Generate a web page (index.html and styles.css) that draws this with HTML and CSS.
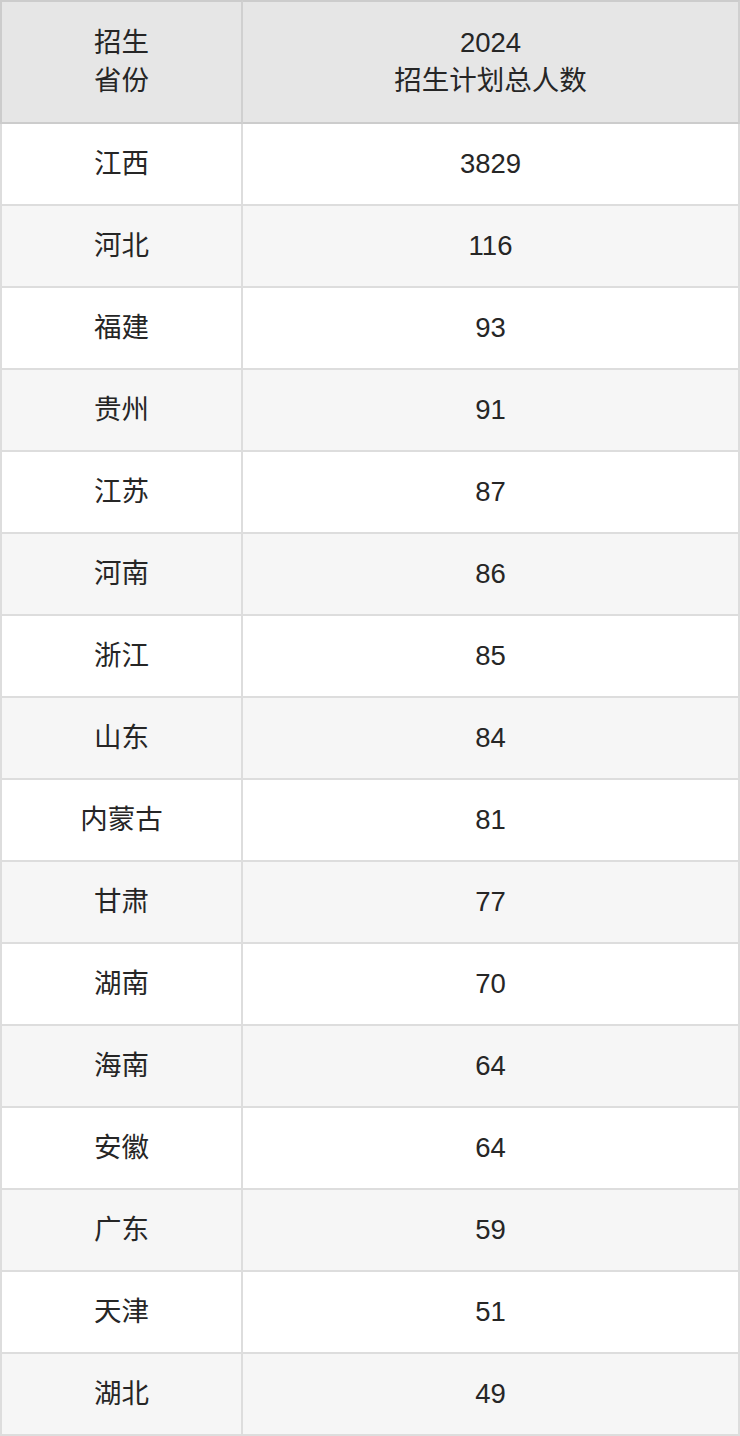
FILE: index.html
```html
<!DOCTYPE html>
<html lang="zh">
<head>
<meta charset="utf-8">
<title>2024 招生计划</title>
<link rel="stylesheet" href="styles.css">
</head>
<body>
<div class="table">
  <div class="cell head first">招生<br>省份</div>
  <div class="cell head">2024<br>招生计划总人数</div>

  <div class="cell first">江西</div><div class="cell">3829</div>
  <div class="cell first alt">河北</div><div class="cell alt">116</div>
  <div class="cell first">福建</div><div class="cell">93</div>
  <div class="cell first alt">贵州</div><div class="cell alt">91</div>
  <div class="cell first">江苏</div><div class="cell">87</div>
  <div class="cell first alt">河南</div><div class="cell alt">86</div>
  <div class="cell first">浙江</div><div class="cell">85</div>
  <div class="cell first alt">山东</div><div class="cell alt">84</div>
  <div class="cell first">内蒙古</div><div class="cell">81</div>
  <div class="cell first alt">甘肃</div><div class="cell alt">77</div>
  <div class="cell first">湖南</div><div class="cell">70</div>
  <div class="cell first alt">海南</div><div class="cell alt">64</div>
  <div class="cell first">安徽</div><div class="cell">64</div>
  <div class="cell first alt">广东</div><div class="cell alt">59</div>
  <div class="cell first">天津</div><div class="cell">51</div>
  <div class="cell first alt">湖北</div><div class="cell alt">49</div>
</div>
</body>
</html>
```

FILE: styles.css
```css
html, body {
  margin: 0;
  padding: 0;
  background: #ffffff;
}

.table {
  display: grid;
  grid-template-columns: 243px 497px;
  width: 740px;
  font-family: "Liberation Sans", "Noto Sans CJK SC", sans-serif;
  font-size: 27.5px;
  line-height: 38px;
  color: #262626;
}

.cell {
  box-sizing: border-box;
  height: 82px;
  display: flex;
  align-items: center;
  justify-content: center;
  text-align: center;
  border-right: 2px solid #dddddd;
  border-bottom: 2px solid #dddddd;
  background: #ffffff;
}

.cell.first {
  border-left: 2px solid #dddddd;
}

.cell.alt {
  background: #f6f6f6;
}

.cell.head {
  height: 124px;
  background: #e6e6e6;
  border-top: 2px solid #cccccc;
  border-bottom: 2px solid #cccccc;
  border-right-color: #d0d0d0;
}

.cell.head.first {
  border-left-color: #cccccc;
}
```
